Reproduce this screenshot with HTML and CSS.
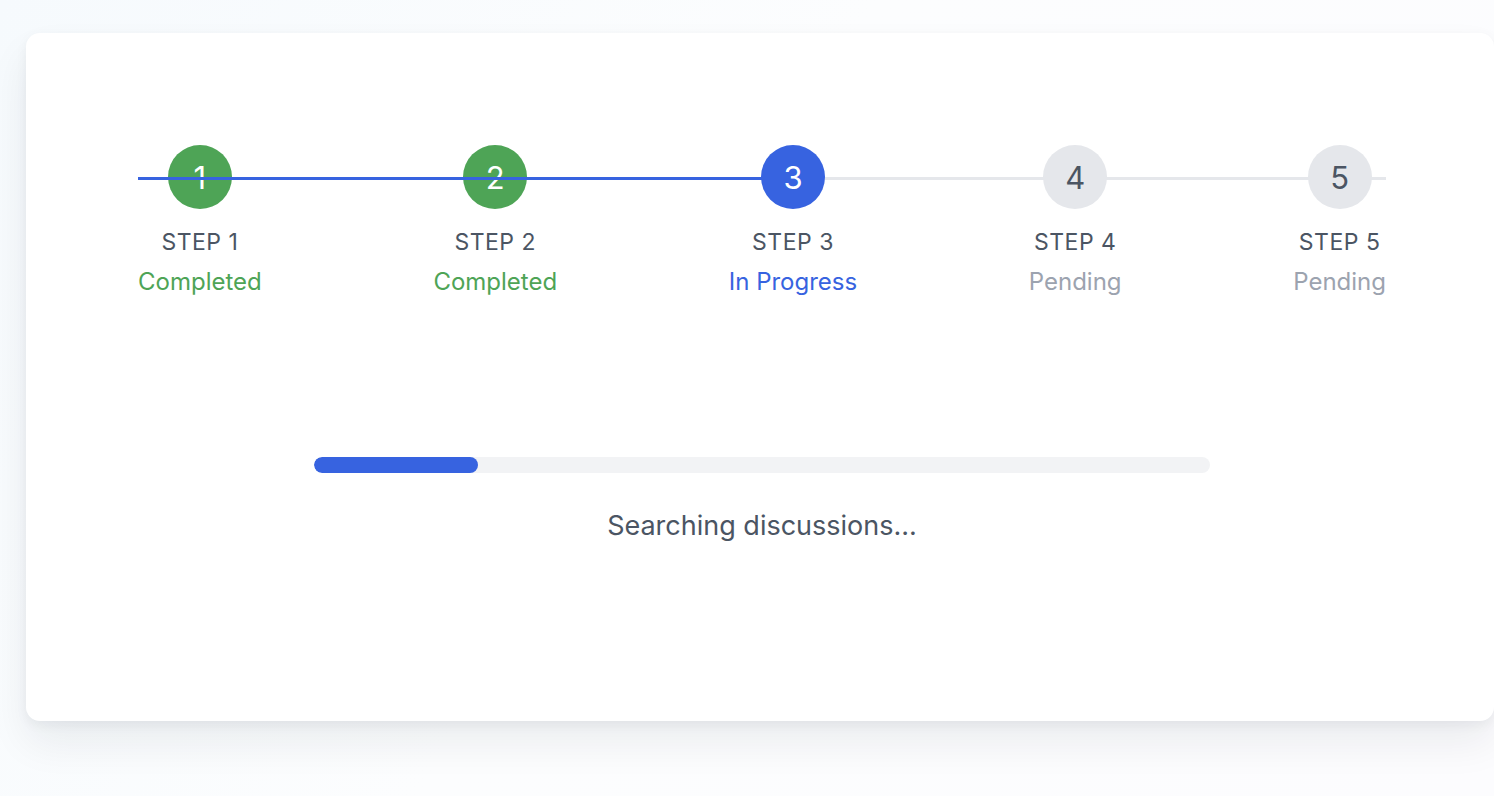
FILE: index.html
```html
<!DOCTYPE html>
<html lang="en">
<head>
<meta charset="utf-8">
<title>Progress</title>
<link rel="stylesheet" href="styles.css">
</head>
<body>
<main class="card">
  <div class="stepper">
    <div class="track"></div>
    <div class="track-fill" style="width:50%"></div>
    <div class="step done">
      <div class="dot">1</div>
      <div class="label">STEP 1</div>
      <div class="status">Completed</div>
    </div>
    <div class="step done">
      <div class="dot">2</div>
      <div class="label">STEP 2</div>
      <div class="status">Completed</div>
    </div>
    <div class="step active">
      <div class="dot">3</div>
      <div class="label">STEP 3</div>
      <div class="status">In Progress</div>
    </div>
    <div class="step pending">
      <div class="dot">4</div>
      <div class="label">STEP 4</div>
      <div class="status">Pending</div>
    </div>
    <div class="step pending">
      <div class="dot">5</div>
      <div class="label">STEP 5</div>
      <div class="status">Pending</div>
    </div>
  </div>
  <section class="loading">
    <div class="bar"><div class="bar-fill" style="width:18.3%"></div></div>
    <p class="message">Searching discussions...</p>
  </section>
</main>
</body>
</html>
```

FILE: styles.css
```css
html, body {
  margin: 0;
  padding: 0;
  overflow: hidden;
}
body {
  width: 1494px;
  height: 796px;
  background: linear-gradient(120deg, #f6fafd 0%, #fcfdfe 45%, #fcfcfe 100%);
  font-family: "Inter", "Noto Sans", sans-serif;
  padding: 33px 0 0 26px;
  box-sizing: border-box;
}
.card {
  background: #ffffff;
  border-radius: 14px;
  box-shadow: 0 22px 40px rgba(15, 23, 42, 0.07), 0 4px 12px rgba(15, 23, 42, 0.05);
  padding: 112px 108px 177px 112px;
  width: 1468px;
  box-sizing: border-box;
}
.stepper {
  position: relative;
  display: flex;
  justify-content: space-between;
}
.track, .track-fill {
  position: absolute;
  left: 0;
  top: 32px;
  height: 3px;
}
.track {
  right: 0;
  background: #e5e7eb;
  z-index: 0;
}
.track-fill {
  background: #3763e0;
  z-index: 2;
}
.step {
  position: relative;
  z-index: 1;
  display: flex;
  flex-direction: column;
  align-items: center;
}
.dot {
  width: 64px;
  height: 64px;
  border-radius: 50%;
  display: flex;
  align-items: center;
  justify-content: center;
  font-size: 31px;
  line-height: 1;
  color: #ffffff;
}
.done .dot { background: #4ea456; }
.active .dot { background: #3763e0; }
.pending .dot { background: #e5e7eb; color: #4b5563; }
.label {
  margin-top: 18px;
  font-size: 23px;
  line-height: 30px;
  letter-spacing: 0.5px;
  color: #4b5563;
}
.status {
  margin-top: 9px;
  font-size: 24px;
  line-height: 32px;
}
.done .status { color: #4ea456; }
.active .status { color: #3763e0; }
.pending .status { color: #9ca3af; }
.loading {
  margin-top: 159px;
  display: flex;
  flex-direction: column;
  align-items: center;
}
.bar {
  width: 896px;
  height: 16px;
  border-radius: 8px;
  background: #f2f3f5;
  overflow: hidden;
}
.bar-fill {
  height: 100%;
  border-radius: 8px;
  background: #3763e0;
}
.message {
  margin: 35px 0 0;
  font-size: 27px;
  line-height: 36px;
  color: #4b5563;
}
```
